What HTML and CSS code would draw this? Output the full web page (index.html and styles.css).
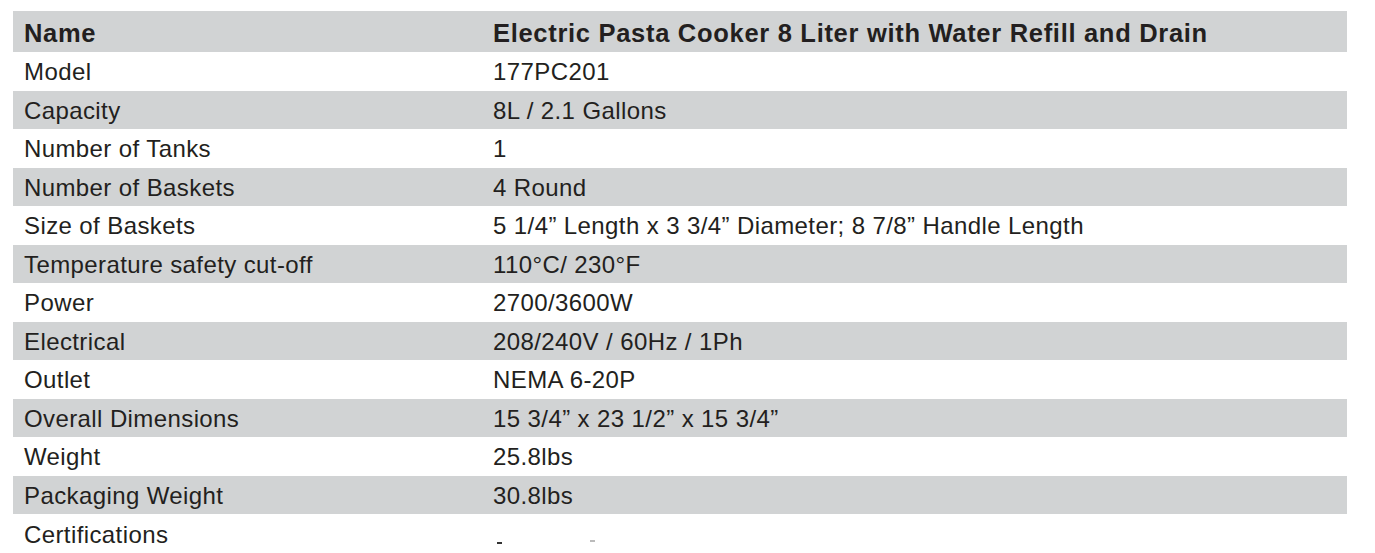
FILE: index.html
```html
<!DOCTYPE html>
<html lang="en">
<head>
<meta charset="utf-8">
<title>Electric Pasta Cooker Specifications</title>
<link rel="stylesheet" href="styles.css">
</head>
<body>
<table class="spec">
  <colgroup><col class="c-label"><col class="c-value"></colgroup>
  <thead>
    <tr class="head"><th>Name</th><th>Electric Pasta Cooker 8 Liter with Water Refill and Drain</th></tr>
  </thead>
  <tbody>
    <tr><td>Model</td><td>177PC201</td></tr>
    <tr class="alt"><td>Capacity</td><td>8L / 2.1 Gallons</td></tr>
    <tr><td>Number of Tanks</td><td>1</td></tr>
    <tr class="alt"><td>Number of Baskets</td><td>4 Round</td></tr>
    <tr><td>Size of Baskets</td><td>5 1/4” Length x 3 3/4” Diameter; 8 7/8” Handle Length</td></tr>
    <tr class="alt"><td>Temperature safety cut-off</td><td>110°C/ 230°F</td></tr>
    <tr><td>Power</td><td>2700/3600W</td></tr>
    <tr class="alt"><td>Electrical</td><td>208/240V / 60Hz / 1Ph</td></tr>
    <tr><td>Outlet</td><td>NEMA 6-20P</td></tr>
    <tr class="alt"><td>Overall Dimensions</td><td>15 3/4” x 23 1/2” x 15 3/4”</td></tr>
    <tr><td>Weight</td><td>25.8lbs</td></tr>
    <tr class="alt"><td>Packaging Weight</td><td>30.8lbs</td></tr>
    <tr class="cert"><td>Certifications</td><td><span class="marks"><span class="mark m1"></span><span class="mark m2"></span></span></td></tr>
  </tbody>
</table>
</body>
</html>
```
FILE: styles.css
```css
html, body {
  margin: 0;
  padding: 0;
  background: #ffffff;
  overflow: hidden;
}
body {
  padding: 11px 0 0 13px;
  font-family: "Liberation Sans", Arial, Helvetica, sans-serif;
  color: #231f20;
}
.spec {
  width: 1334px;
  border-collapse: collapse;
  table-layout: fixed;
}
.c-label { width: 469px; }
.spec th, .spec td {
  padding: 0 0 0 11px;
  text-align: left;
  vertical-align: middle;
  white-space: nowrap;
  overflow: hidden;
}
.head th {
  height: 41px;
  padding-top: 3px;
  box-sizing: border-box;
  background: #d1d3d4;
  font-size: 25.5px;
  font-weight: bold;
  letter-spacing: 0.7px;
}
.spec td {
  height: 38.5px;
  padding-top: 2px;
  box-sizing: border-box;
  font-size: 24px;
  letter-spacing: 0.4px;
}
.alt td { background: #d1d3d4; }
.cert td { vertical-align: top; padding-top: 7px; }
.marks {
  display: flex;
  gap: 88px;
  padding: 21px 0 0 4px;
}
.mark {
  display: block;
  width: 5px;
  height: 2px;
  background: #333;
}
.mark.m2 { background: #bbb; margin-top: -2px; }
```
